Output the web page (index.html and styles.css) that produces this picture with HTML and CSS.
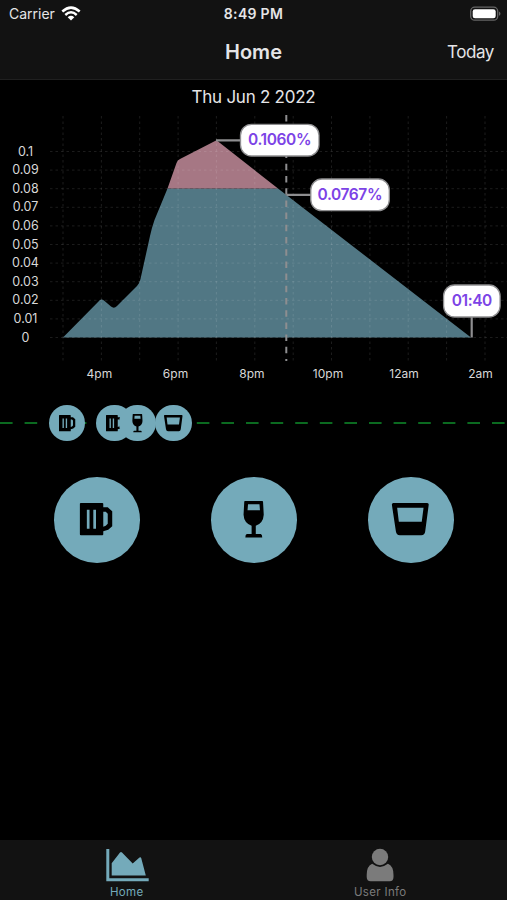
FILE: index.html
```
<!DOCTYPE html>
<html lang="en">
<head>
<meta charset="utf-8">
<title>Home</title>
<link rel="stylesheet" href="styles.css">
</head>
<body>

<!-- drink icons, used by the timeline and the buttons -->
<svg class="defs">
  <symbol id="beer" viewBox="0 0 86 86">
    <path fill-rule="evenodd" d="M27 26H48.500Q49.500 26 49.500 27V30.500H54L58.500 34.500V49.500L54.500 53L49.500 54.500V57.500Q49.500 58.500 48.500 58.500H27Q26 58.500 26 57.500V27Q26 26 27 26ZM33 33V52H35.700V33ZM39.500 33V52H42.200V33ZM49.500 35V50L52 49L54 47V37L52 35Z"/>
  </symbol>
  <symbol id="wine" viewBox="0 0 86 86">
    <path fill-rule="evenodd" d="M34 24H51.500Q52.200 24 52.300 25L53 38Q52.500 46.500 45 49V57.300H50Q51.500 57.500 51.500 60.700H34.500Q34.500 57.500 36 57.300H40.800V49Q33.200 46.500 32.700 38L33.400 25Q33.500 24 34 24ZM37.200 27.500L36.700 33.500H49.200L48.700 27.500Z"/>
  </symbol>
  <symbol id="shot" viewBox="0 0 86 86">
    <path fill-rule="evenodd" d="M25.500 26H59.500Q61.200 26 61 28L57.500 54.500Q57 58.500 53.500 58.500H32Q28.600 58.500 28 54.500L24 28Q23.800 26 25.500 26ZM29.300 31L31 45H54L55.800 31Z"/>
  </symbol>
</svg>

<div class="app">
  <header class="header">
    <div class="status">
      <div class="carrier">
        Carrier
        <svg width="20" height="16" viewBox="0 0 20 16">
          <path d="M1.300 5.500Q10 -2.300 18.700 5.500" fill="none" stroke="#fff" stroke-width="2.500"/>
          <path d="M4.300 9Q10 3.700 15.700 9" fill="none" stroke="#fff" stroke-width="2.400"/>
          <path d="M6.700 11.200Q10 8.300 13.300 11.200L10 14.600Z" fill="#fff"/>
        </svg>
      </div>
      <div class="time">8:49 PM</div>
      <div class="battery">
        <svg width="32" height="16" viewBox="0 0 32 16">
          <rect x=".7" y="1.200" width="27" height="13" rx="4" fill="none" stroke="#666" stroke-width="1.300"/>
          <rect x="2.700" y="3.200" width="23" height="9" rx="2.300" fill="#fff"/>
          <path d="M29 5.500Q32 7.700 29 10Z" fill="#666"/>
        </svg>
      </div>
    </div>
    <div class="nav">
      <span></span>
      <h1>Home</h1>
      <a class="today">Today</a>
    </div>
  </header>

  <p class="date">Thu Jun 2 2022</p>

  <svg class="chart" width="507" height="284" viewBox="0 110 507 284">
    <path class="low" d="M63 337.500L98.500 301.500Q101 298 104 300.500L111 306.500Q114 309 117 306L137 286Q139.500 283.500 140.500 279L150 236Q152 227 154.500 220L167.500 188.500H278L471 337.500Z"/>
    <path class="high" d="M167.500 188.500L176.500 163Q177.500 160 180 159L216.500 140.300L278 188.500Z"/>
    <path class="grid" d="M63 116V361M101.400 116V361M139.700 116V361M178.100 116V361M216.400 116V361M254.800 116V361M293.200 116V361M331.500 116V361M369.900 116V361M408.200 116V361M446.600 116V361M485 116V361"/>
    <path class="grid" d="M50 151.500H507M50 170.100H507M50 188.700H507M50 207.300H507M50 225.900H507M50 244.500H507M50 263.100H507M50 281.700H507M50 300.300H507M50 318.900H507M50 337.500H507"/>
    <path class="now" d="M286.300 115V361"/>

    <g class="ylabels">
      <text x="25.500" y="155.500">0.1</text>
      <text x="25.500" y="174.100">0.09</text>
      <text x="25.500" y="192.700">0.08</text>
      <text x="25.500" y="211.300">0.07</text>
      <text x="25.500" y="229.900">0.06</text>
      <text x="25.500" y="248.500">0.05</text>
      <text x="25.500" y="267.100">0.04</text>
      <text x="25.500" y="285.700">0.03</text>
      <text x="25.500" y="304.300">0.02</text>
      <text x="25.500" y="322.900">0.01</text>
      <text x="25.500" y="341.500">0</text>
    </g>
    <g class="xlabels">
      <text x="99.400" y="378">4pm</text>
      <text x="175.500" y="378">6pm</text>
      <text x="252" y="378">8pm</text>
      <text x="328" y="378">10pm</text>
      <text x="404" y="378">12am</text>
      <text x="480.500" y="378">2am</text>
    </g>

    <path class="pointer" d="M216 140.300H242M286.500 194.800H312M471.700 316V337.500"/>
    <g class="callout">
      <rect x="240.500" y="124.300" width="78.500" height="31.700" rx="11"/>
      <text x="279.600" y="145">0.1060%</text>
      <rect x="310.800" y="179" width="78.500" height="31.700" rx="11"/>
      <text x="349.800" y="199.700">0.0767%</text>
      <rect x="443.600" y="285" width="56.500" height="32" rx="11"/>
      <text x="471.800" y="305.800">01:40</text>
    </g>
  </svg>

  <div class="timeline">
    <div class="drink first"><svg><use href="#beer"/></svg></div>
    <div class="drink second"><svg><use href="#beer"/></svg></div>
    <div class="drink third"><svg><use href="#wine"/></svg></div>
    <div class="drink fourth"><svg><use href="#shot"/></svg></div>
    <svg class="dashes" width="507" height="4"><path d="M0 2H507"/></svg>
  </div>

  <div class="buttons">
    <div class="button"><svg><use href="#beer"/></svg></div>
    <div class="button"><svg><use href="#wine"/></svg></div>
    <div class="button"><svg><use href="#shot"/></svg></div>
  </div>

  <nav class="tabs">
    <a class="tab active">
      <svg width="44" height="36" viewBox="105 847 44 36">
        <path d="M106.300 849H109.300V878.300H148.700V881.200H106.300ZM111.700 875.500V863.300L120 852.500Q121 851.500 122 852.500L132.700 863.500L139.500 857.500Q140.800 856.800 141.200 858L145.800 875.500Z"/>
      </svg>
      <span>Home</span>
    </a>
    <a class="tab">
      <svg width="44" height="36" viewBox="358.300 847 44 36">
        <circle cx="380.300" cy="857" r="8.200"/>
        <path d="M372.500 863.800Q380.300 870 388.200 863.800Q393.800 866 393.800 875V877Q393.800 881.200 390 881.200H371Q367 881.200 367 877V875Q367 866 372.500 863.800Z"/>
      </svg>
      <span>User Info</span>
    </a>
  </nav>
</div>

</body>
</html>
```
FILE: styles.css
```
body {
  margin: 0;
  background: #000;
  color: #e5e5e7;
  font-family: Inter, "Liberation Sans", sans-serif;
}
.defs {
  display: none;
}
.app {
  display: flex;
  flex-direction: column;
  width: 507px;
  height: 900px;
  overflow: hidden;
}

/* header */
.header {
  height: 79px;
  background: #121212;
  border-bottom: 1px solid #202020;
}
.status {
  display: grid;
  grid-template-columns: 1fr auto 1fr;
  align-items: center;
  height: 27px;
  padding: 0 5px 0 9px;
  font-size: 14px;
}
.carrier {
  display: flex;
  align-items: center;
  gap: 6px;
}
.time {
  font-weight: 600;
  letter-spacing: 0.3px;
  padding-right: 4px;
}
.battery {
  display: flex;
  justify-content: flex-end;
}
.nav {
  display: grid;
  grid-template-columns: 1fr auto 1fr;
  align-items: center;
  height: 50px;
  padding: 0 13px;
}
.nav h1 {
  margin: 0;
  font-size: 20px;
  font-weight: 600;
}
.today {
  font-size: 17px;
  letter-spacing: -0.4px;
  text-align: right;
}
.date {
  margin: 0;
  height: 30px;
  line-height: 35px;
  font-size: 17px;
  letter-spacing: -0.25px;
  text-align: center;
}

/* chart */
.chart {
  display: block;
  flex-shrink: 0;
}
.low {
  fill: #517784;
}
.high {
  fill: #a67784;
}
.grid {
  fill: none;
  stroke: #fff;
  stroke-opacity: 0.11;
  stroke-dasharray: 2.5 3;
}
.now {
  stroke: #8e8e90;
  stroke-width: 2;
  stroke-dasharray: 6.500 5.700;
}
.ylabels, .xlabels {
  fill: #d8d8d8;
  font-size: 12px;
  text-anchor: middle;
}
.ylabels {
  font-size: 12.5px;
}
.pointer {
  fill: none;
  stroke: #8e8e90;
  stroke-width: 2.2;
}
.callout {
  font-size: 15.5px;
  font-weight: 600;
  letter-spacing: -0.4px;
  text-anchor: middle;
}
.callout rect {
  fill: #fff;
  stroke: #8e8e90;
  stroke-width: 1.3;
}
.callout text {
  fill: #7c43e6;
}

/* drinks */
.timeline {
  position: relative;
  display: flex;
  align-items: center;
  height: 58px;
}
.dashes {
  position: absolute;
  top: 27px;
  left: 0;
  z-index: -1;
}
.dashes path {
  stroke: #0b6a20;
  stroke-width: 2;
  stroke-dasharray: 12.6 12;
}
.drink {
  display: flex;
  align-items: center;
  justify-content: center;
  width: 36.6px;
  height: 36.6px;
  border-radius: 50%;
  background: #74aaba;
}
.drink svg {
  flex-shrink: 0;
  width: 43px;
  height: 43px;
}
.first {
  margin-left: 48.8px;
}
.second {
  margin-left: 10.9px;
}
.third {
  margin-left: -13.7px;
}
.fourth {
  margin-left: -0.7px;
}
.buttons {
  display: flex;
  justify-content: space-between;
  padding: 25px 53.5px 0 54px;
}
.button {
  width: 85.6px;
  height: 85.6px;
  border-radius: 50%;
  background: #74aaba;
}
.button svg {
  display: block;
  width: 85.6px;
  height: 85.6px;
}

/* tab bar */
.tabs {
  display: flex;
  height: 60px;
  margin-top: auto;
  background: #121212;
}
.tab {
  display: flex;
  flex: 1;
  flex-direction: column;
  align-items: center;
  padding-top: 7px;
  color: #7b7b7b;
  fill: #7b7b7b;
  font-size: 11.5px;
  line-height: 17px;
  letter-spacing: 0.35px;
}
.tab svg {
  flex-shrink: 0;
}
.tab span {
  padding-top: 1px;
}
.active {
  color: #74aaba;
  fill: #74aaba;
}
```
